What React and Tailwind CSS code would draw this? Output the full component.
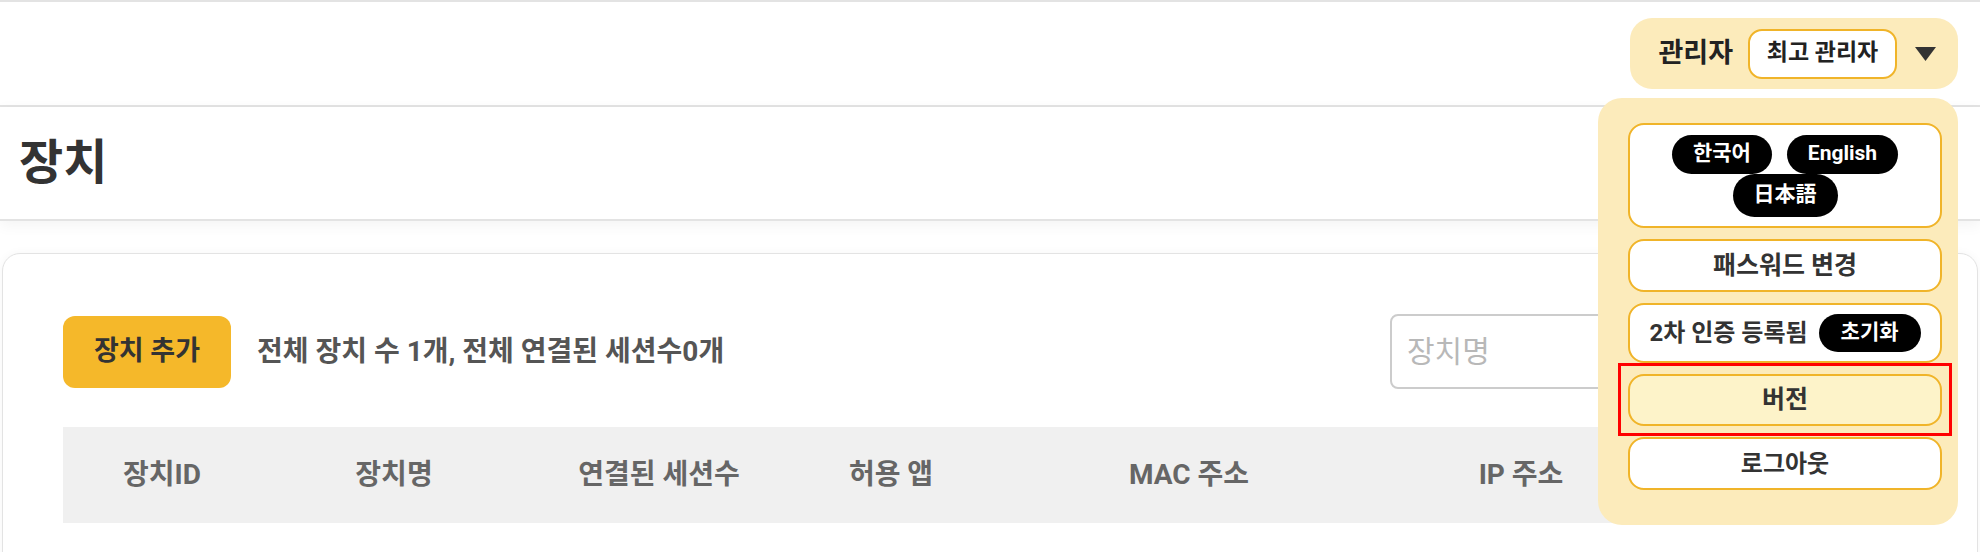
import { useState } from 'react'

const columns = [
  { label: '장치ID' },
  { label: '장치명' },
  { label: '연결된 세션수' },
  { label: '허용 앱' },
  { label: 'MAC 주소' },
  { label: 'IP 주소' },
  { label: '등록일' },
]

function Pill({ children, className = '' }) {
  return (
    <span className={`px-[21px] rounded-full bg-black text-white text-[21px] font-bold flex items-center ${className}`}>
      {children}
    </span>
  )
}

function AdminMenu() {
  return (
    <div className="absolute left-[1598px] top-[98px] w-[360px] h-[427px] rounded-[24px] bg-[#fcebbb] pl-[30px] pr-[16px] pt-[25px] flex flex-col gap-[11px]">
      <div className="h-[105px] rounded-[16px] border-2 border-[#f0b429] bg-white flex flex-wrap justify-center content-center gap-x-[15px] px-[30px]">
        <Pill className="h-[39px]">한국어</Pill>
        <Pill className="h-[39px]">English</Pill>
        <Pill className="h-[43px]">日本語</Pill>
      </div>
      <button className="h-[53px] rounded-[16px] border-2 border-[#f0b429] bg-white text-[25px] font-bold text-[#333]">
        패스워드 변경
      </button>
      <div className="h-[60px] rounded-[16px] border-2 border-[#f0b429] bg-white flex items-center justify-center gap-[11px] text-[24px] font-bold text-[#333]">
        <span>2차 인증 등록됨</span>
        <Pill className="h-[38px] px-[22px]">초기화</Pill>
      </div>
      <div className="relative">
        <button className="w-full h-[52px] rounded-[16px] border-2 border-[#f0b429] bg-[#fdf3c9] text-[25px] font-bold text-[#333]">
          버전
        </button>
        <span className="absolute -left-[10px] -right-[10px] -top-[11px] -bottom-[10px] border-[3px] border-[#ff0000] pointer-events-none" />
      </div>
      <button className="h-[53px] rounded-[16px] border-2 border-[#f0b429] bg-white text-[24px] font-bold text-[#333]">
        로그아웃
      </button>
    </div>
  )
}

export default function App() {
  const [query, setQuery] = useState('')

  return (
    <div className="relative w-[1980px] h-[552px] overflow-hidden bg-white font-['Roboto','Noto_Sans_CJK_KR',sans-serif] text-[#333]">
      <header className="h-[107px] border-t-2 border-b-2 border-[#e3e3e3] flex items-center justify-end pr-[22px]">
        <div className="h-[71px] rounded-[22px] bg-[#fcebbb] flex items-center pl-[28px] pr-[22px]">
          <span className="text-[27px] font-bold text-[#222]">관리자</span>
          <span className="ml-[15px] h-[50px] w-[149px] rounded-[14px] border-2 border-[#f0b429] bg-white flex items-center justify-center text-[23px] font-bold text-[#222]">
            최고 관리자
          </span>
          <svg className="ml-[18px]" width="21" height="14" viewBox="0 0 21 14">
            <polygon points="0,0 21,0 10.5,14" fill="#333" />
          </svg>
        </div>
      </header>

      <div className="h-[114px] border-b-2 border-[#e3e3e3] flex items-center pl-[19px] shadow-[0_4px_14px_rgba(0,0,0,0.05)]">
        <h1 className="text-[48px] font-bold text-[#333] leading-none">장치</h1>
      </div>

      <main className="pt-[32px] px-[2px]">
        <section className="rounded-t-[18px] border border-[#e3e3e3] bg-white px-[60px] pt-[60px] pb-[40px] shadow-[0_0_10px_rgba(0,0,0,0.04)]">
          <div className="flex items-center justify-between">
            <div className="flex items-center">
              <button className="h-[72px] w-[168px] rounded-[12px] bg-[#f5b82a] text-[27px] font-bold text-[#333]">
                장치 추가
              </button>
              <span className="ml-[26px] text-[28px] font-bold text-[#555]">
                전체 장치 수 1개, 전체 연결된 세션수0개
              </span>
            </div>
            <input
              value={query}
              onChange={e => setQuery(e.target.value)}
              placeholder="장치명"
              className="h-[75px] w-[527px] rounded-[8px] border-2 border-[#cccccc] px-[15px] text-[30px] placeholder:text-[#b8b8b8] outline-none"
            />
          </div>

          <div className="mt-[38px] h-[96px] bg-[#f0f0f0] grid grid-cols-[198px_266px_264px_200px_396px_268px_1fr] items-center">
            {columns.map(col => (
              <div key={col.label} className="text-center text-[28px] font-bold text-[#666]">
                {col.label}
              </div>
            ))}
          </div>
        </section>
      </main>

      <AdminMenu />
    </div>
  )
}
